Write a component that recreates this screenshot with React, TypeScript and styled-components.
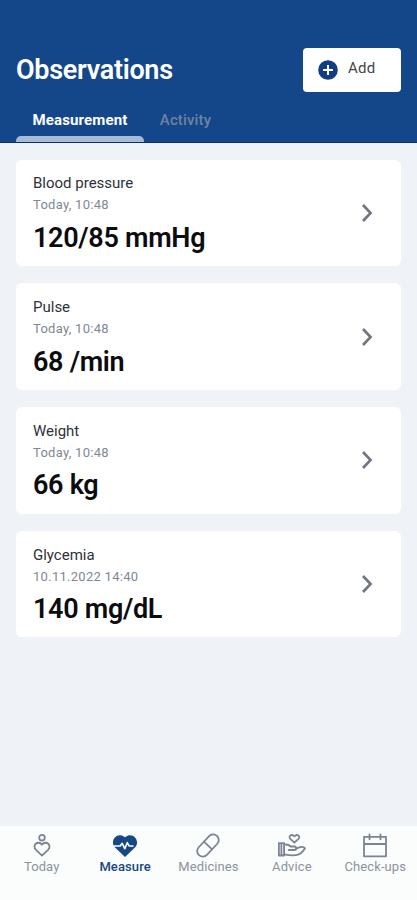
import React from "react";
import styled, { createGlobalStyle } from "styled-components";

const GlobalStyle = createGlobalStyle`
  * { box-sizing: border-box; }
  body { margin: 0; background: #eff3f8; }
`;

const Screen = styled.div`
  display: flex;
  flex-direction: column;
  width: 417px;
  height: 900px;
  overflow: hidden;
  background: #eff3f8;
  font-family: Roboto, "Liberation Sans", sans-serif;
  color: #0b0c10;
`;

const Header = styled.header`
  display: flex;
  flex-direction: column;
  justify-content: space-between;
  height: 143px;
  padding: 48px 16px 0;
  background: #14478a;
  border-bottom: 1px solid #083078;
`;

const TitleRow = styled.div`
  display: flex;
  align-items: center;
  justify-content: space-between;
  height: 44px;
`;

const Title = styled.h1`
  margin: 0;
  font-size: 27px;
  line-height: 44px;
  font-weight: 600;
  letter-spacing: -0.3px;
  color: #fff;
`;

const AddButton = styled.button`
  display: flex;
  align-items: center;
  gap: 10px;
  width: 98px;
  height: 44px;
  padding: 0 0 0 15px;
  border: 0;
  border-radius: 4px;
  background: #fff;
  color: #45464a;
  font: 400 15px/20px Roboto, sans-serif;
  letter-spacing: 0.2px;
`;

const AddLabel = styled.span`
  padding-bottom: 4px;
`;

const Tabs = styled.nav`
  display: flex;
  height: 34px;
`;

const Tab = styled.div<{ $active?: boolean }>`
  display: flex;
  flex-direction: column;
  justify-content: space-between;
  align-items: center;
  width: ${(p) => (p.$active ? "128px" : "83px")};
  font-size: 15px;
  line-height: 25px;
  letter-spacing: 0.15px;
  font-weight: ${(p) => (p.$active ? 700 : 500)};
  color: ${(p) => (p.$active ? "#fff" : "#6f82a0")};

  &::after {
    content: "";
    width: 100%;
    height: 6px;
    border-radius: 5px 5px 0 0;
    background: ${(p) => (p.$active ? "#a7bbd8" : "transparent")};
  }
`;

const List = styled.main`
  flex: 1;
  display: flex;
  flex-direction: column;
  gap: 17.3px;
  padding: 16.5px 16px 0;
`;

const Card = styled.section`
  display: flex;
  align-items: center;
  justify-content: space-between;
  height: 106.5px;
  padding: 0 27px 0 17px;
  border-radius: 6px;
  background: #fff;
`;

const Reading = styled.div`
  display: flex;
  flex-direction: column;
  padding-top: 5.4px;
`;

const Name = styled.span`
  font-size: 15px;
  line-height: 22px;
  color: #303136;
`;

const Time = styled.span`
  font-size: 13px;
  line-height: 22.6px;
  letter-spacing: 0.28px;
  color: #7f8793;
`;

const Value = styled.strong`
  font-size: 27px;
  line-height: 42px;
  font-weight: 600;
  letter-spacing: -0.3px;
`;

const BottomBar = styled.nav`
  display: grid;
  grid-template-columns: repeat(5, 83.4px);
  height: 74px;
  padding-top: 7px;
  background: #fbfcfc;
`;

const NavItem = styled.div<{ $active?: boolean }>`
  display: flex;
  flex-direction: column;
  align-items: center;
  white-space: nowrap;
  font-size: 13px;
  line-height: 15px;
  letter-spacing: 0.1px;
  font-weight: ${(p) => (p.$active ? 500 : 400)};
  color: ${(p) => (p.$active ? "#174886" : "#8c939f")};
`;

const NavIcon = styled.svg`
  width: 28px;
  height: 26px;
  fill: none;
  stroke: #7c8493;
  stroke-width: 1.8;
  stroke-linecap: round;
  stroke-linejoin: round;
`;

const readings = [
  { name: "Blood pressure", time: "Today, 10:48", value: "120/85 mmHg" },
  { name: "Pulse", time: "Today, 10:48", value: "68 /min" },
  { name: "Weight", time: "Today, 10:48", value: "66 kg" },
  { name: "Glycemia", time: "10.11.2022 14:40", value: "140 mg/dL" },
];

const navItems = [
  {
    label: "Today",
    icon: (
      <>
        <circle cx="14" cy="4.7" r="2.8" />
        <path d="M14 22.6 8 16.9C3.6 12.4 9.8 6.8 14 11.6c4.2-4.8 10.4.8 6 5.3Z" />
      </>
    ),
  },
  {
    label: "Measure",
    active: true,
    icon: (
      <>
        <path
          d="M14 24 3.8 14.2C-1.8 8 6.5-2.2 14 4.3c7.5-6.5 15.8 3.7 10.2 9.9Z"
          fill="#174886"
          stroke="none"
        />
        <path d="M3 13h6.2l2-2.7 2.6 5.4 2.5-6.2 1.8 3.5H22" stroke="#fff" strokeWidth="1.6" />
      </>
    ),
  },
  {
    label: "Medicines",
    icon: (
      <g transform="rotate(-47 14 12.5)">
        <rect x="0.8" y="6.9" width="26.4" height="11.2" rx="5.6" />
        <path d="M14 6.9v11.2" />
      </g>
    ),
  },
  {
    label: "Advice",
    icon: (
      <g strokeWidth="1.8">
        <path d="M16.4 9.6 12.3 5.9C9.8 3 13.6.5 16.4 3.3c2.8-2.8 6.6-.3 4.1 2.6Z" />
        <path d="M.9 10.2h5.2v12.3H.9ZM3.4 10.2v12.3M6.1 11.8c2.6-.8 4.6-.2 6.6 1.7h3.8c2.4 0 2.2 3.5 0 3.5h-5.8" />
        <path d="M18.2 15.6 22 14.2c2-.7 4-.3 5 1.1-2.3 4-5.8 6.6-9.6 6.9-3.8.3-7.8-.2-11.3-.8" />
      </g>
    ),
  },
  {
    label: "Check-ups",
    icon: <path d="M3 3.8h22v19.5H3ZM3 11h22M8.5 1.3v5M19.5 1.3v5" />,
  },
];

export default function App() {
  return (
    <Screen>
      <GlobalStyle />
      <Header>
        <TitleRow>
          <Title>Observations</Title>
          <AddButton>
            <svg width="20" height="20" viewBox="0 0 20 20">
              <circle cx="10" cy="10" r="9.8" fill="#103d83" />
              <path d="M10 5v10M5 10h10" stroke="#fff" strokeWidth="2" />
            </svg>
            <AddLabel>Add</AddLabel>
          </AddButton>
        </TitleRow>
        <Tabs>
          <Tab $active>Measurement</Tab>
          <Tab>Activity</Tab>
        </Tabs>
      </Header>
      <List>
        {readings.map((r) => (
          <Card key={r.name}>
            <Reading>
              <Name>{r.name}</Name>
              <Time>{r.time}</Time>
              <Value>{r.value}</Value>
            </Reading>
            <svg width="14" height="20" viewBox="0 0 14 20">
              <path d="m3 2 7.6 8L3 18" fill="none" stroke="#6f7682" strokeWidth="2.6" />
            </svg>
          </Card>
        ))}
      </List>
      <BottomBar>
        {navItems.map((n) => (
          <NavItem key={n.label} $active={n.active}>
            <NavIcon viewBox="0 0 28 26">{n.icon}</NavIcon>
            {n.label}
          </NavItem>
        ))}
      </BottomBar>
    </Screen>
  );
}
